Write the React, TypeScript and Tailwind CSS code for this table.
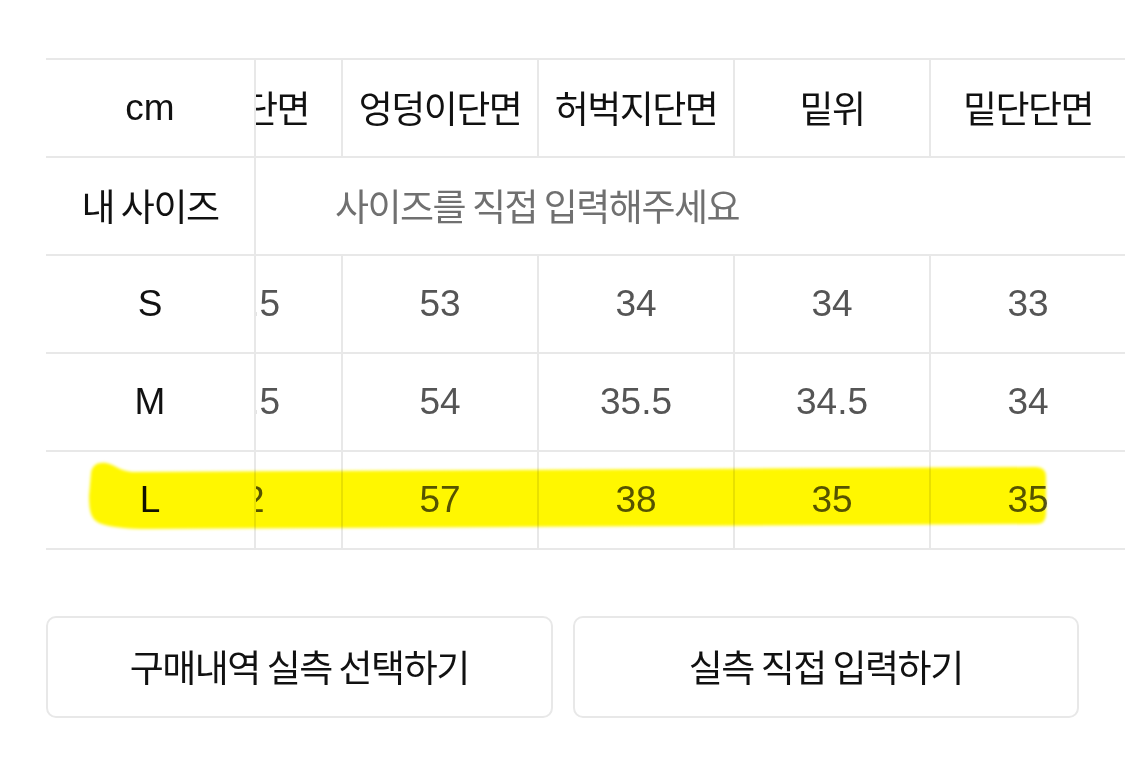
import { useState } from "react"

const COLUMNS = ["총장", "허리단면", "엉덩이단면", "허벅지단면", "밑위", "밑단단면"]

const ROWS = [
  { size: "S", values: ["98", "38.5", "53", "34", "34", "33"] },
  { size: "M", values: ["100", "40.5", "54", "35.5", "34.5", "34"] },
  { size: "L", values: ["102", "42", "57", "38", "35", "35"] },
]

const KR = "font-['Noto_Sans_CJK_KR',sans-serif] text-[37px] tracking-[-1.5px]"
const LATIN = "font-['Liberation_Sans','Noto_Sans_CJK_KR',sans-serif] text-[37px]"
const LINE = "border-[#e8e8e8]"

function Highlight() {
  // freehand marker stroke drawn over the L row
  return (
    <svg
      className="pointer-events-none absolute left-0 top-0 mix-blend-multiply"
      width={1125}
      height={763}
      viewBox="0 0 1125 763"
    >
      <defs>
        <filter id="soft" x="-5%" y="-20%" width="110%" height="140%">
          <feGaussianBlur stdDeviation="1.5" />
        </filter>
      </defs>
      <path
        filter="url(#soft)"
        fill="#fff700"
        d="M 91 473 C 92 465, 98 462, 106 463 C 114 464, 119 471, 132 472 L 1036 467 Q 1046 467, 1046 477 L 1046 514 Q 1046 524, 1036 524 L 150 529 C 125 529, 110 527, 99 523 C 91 519, 89 511, 89 496 Z"
      />
    </svg>
  )
}

export default function App() {
  const [mySize, setMySize] = useState("")

  return (
    <div className="relative min-h-screen bg-white pt-[58px]">
      <div className="flex pl-[46px]">
        <div className={`w-[210px] shrink-0 border-r-2 border-t-2 ${LINE}`}>
          <div className={`flex h-[98px] items-center justify-center border-b-2 ${LINE} ${LATIN} text-[#111]`}>
            cm
          </div>
          <div className={`flex h-[98px] items-center justify-center whitespace-nowrap border-b-2 ${LINE} ${KR} text-[#111]`}>
            내 사이즈
          </div>
          {ROWS.map((row) => (
            <div
              key={row.size}
              className={`flex h-[98px] items-center justify-center border-b-2 ${LINE} ${LATIN} text-[#111]`}
            >
              {row.size}
            </div>
          ))}
        </div>

        {/* scrolled part, shown at its right end */}
        <div className="flex flex-1 justify-end overflow-hidden">
          <div className={`w-[1176px] shrink-0 border-t-2 ${LINE}`}>
            <div className={`grid h-[98px] grid-cols-6 border-b-2 ${LINE}`}>
              {COLUMNS.map((col, i) => (
                <div
                  key={col}
                  className={`flex items-center justify-center whitespace-nowrap ${i > 0 ? "border-l-2" : ""} ${LINE} ${KR} text-[#111]`}
                >
                  {col}
                </div>
              ))}
            </div>
            <div className={`flex h-[98px] items-center border-b-2 ${LINE}`}>
              <input
                value={mySize}
                onChange={(e) => setMySize(e.target.value)}
                placeholder="사이즈를 직접 입력해주세요"
                className={`w-full bg-transparent text-center outline-none placeholder:text-[#707070] ${KR} text-[#333]`}
              />
            </div>
            {ROWS.map((row) => (
              <div key={row.size} className={`grid h-[98px] grid-cols-6 border-b-2 ${LINE}`}>
                {row.values.map((v, i) => (
                  <div
                    key={i}
                    className={`flex items-center justify-center ${i > 0 ? "border-l-2" : ""} ${LINE} ${LATIN} text-[#555]`}
                  >
                    {v}
                  </div>
                ))}
              </div>
            ))}
          </div>
        </div>
      </div>

      <div className="mt-[66px] flex gap-[20px] px-[46px]">
        <button className={`h-[102px] flex-1 rounded-[10px] border-2 ${LINE} bg-white ${KR} text-[#111]`}>
          구매내역 실측 선택하기
        </button>
        <button className={`h-[102px] flex-1 rounded-[10px] border-2 ${LINE} bg-white ${KR} text-[#111]`}>
          실측 직접 입력하기
        </button>
      </div>

      <Highlight />
    </div>
  )
}
